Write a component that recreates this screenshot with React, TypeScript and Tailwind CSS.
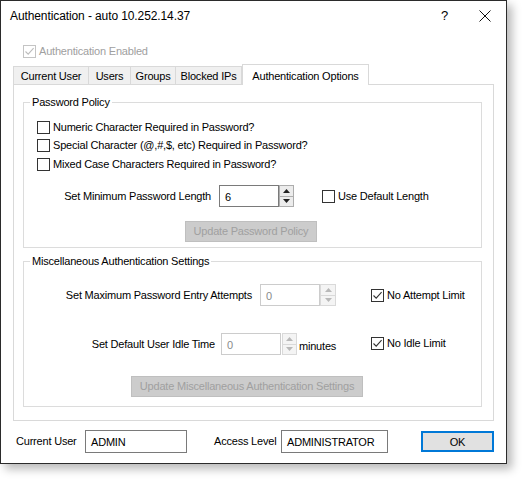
import React from "react"

const font = "font-['Liberation_Sans',Arial,sans-serif]"

function CheckBox({ checked = false, disabled = false }: { checked?: boolean; disabled?: boolean }) {
  return (
    <span
      className={
        "flex h-[13px] w-[13px] shrink-0 items-center justify-center border bg-white " +
        (disabled ? "border-[#c4c4c4]" : "border-[#333333]")
      }
    >
      {checked && (
        <svg width="11" height="11" viewBox="0 0 11 11">
          <path
            d="M1.5 5.5 L4.2 8.2 L9.6 2.2"
            fill="none"
            stroke={disabled ? "#bcbcbc" : "#333333"}
            strokeWidth="1.1"
          />
        </svg>
      )}
    </span>
  )
}

function CheckRow({ label, checked, disabled }: { label: string; checked?: boolean; disabled?: boolean }) {
  return (
    <label className="flex items-center">
      <CheckBox checked={checked} disabled={disabled} />
      <span className={"ml-[3px] " + (disabled ? "text-[#a0a0a0]" : "text-black")}>{label}</span>
    </label>
  )
}

function Spinner({ disabled = false, w = "w-[15px]" }: { disabled?: boolean; w?: string }) {
  const border = disabled ? "border-[#d9d9d9]" : "border-[#adadad]"
  const bg = disabled ? "bg-[#f4f4f4]" : "bg-[#ececec]"
  const fill = disabled ? "#b8b8b8" : "#202020"
  return (
    <div className={"flex h-[22px] flex-col " + w}>
      <div className={"flex flex-1 items-center justify-center border " + border + " " + bg}>
        <svg width="7" height="4" viewBox="0 0 7 4">
          <path d="M0 4 L3.5 0 L7 4 Z" fill={fill} />
        </svg>
      </div>
      <div className={"flex flex-1 items-center justify-center border border-t-0 " + border + " " + bg}>
        <svg width="7" height="4" viewBox="0 0 7 4">
          <path d="M0 0 L7 0 L3.5 4 Z" fill={fill} />
        </svg>
      </div>
    </div>
  )
}

function NumBox({ value, disabled = false }: { value: string; disabled?: boolean }) {
  return (
    <div
      className={
        "flex h-[22px] w-[60px] items-start border bg-white pl-[5px] pt-[3px] " +
        (disabled ? "border-[#cccccc] text-[#8a8a8a]" : "border-[#7a7a7a] text-black")
      }
    >
      {value}
    </div>
  )
}

function Tab({ label, w, active = false }: { label: string; w: string; active?: boolean }) {
  if (active) {
    return (
      <div
        className={
          "relative z-10 -mb-px flex h-[21px] items-start justify-center border border-b-0 border-[#d9d9d9] bg-white pt-[3px] text-black " +
          w
        }
      >
        {label}
      </div>
    )
  }
  return (
    <div
      className={
        "flex h-[18px] items-center justify-center border border-b-0 border-l-0 border-[#d9d9d9] bg-[#f0f0f0] pt-[1px] text-black first:border-l " +
        w
      }
    >
      {label}
    </div>
  )
}

function GroupBox({ title, className, children }: { title: string; className?: string; children: React.ReactNode }) {
  return (
    <fieldset className={"w-[459px] border border-[#dcdcdc] " + (className ?? "")}>
      <legend className="ml-[6px] h-[14px] px-[2px] leading-[14px] text-black">{title}</legend>
      {children}
    </fieldset>
  )
}

function DisabledButton({ label, className }: { label: string; className: string }) {
  return (
    <div
      className={
        "flex h-[21px] items-center justify-center border border-[#bfbfbf] bg-[#cccccc] text-[#a0a0a0] " + className
      }
    >
      {label}
    </div>
  )
}

export default function App() {
  return (
    <div className={"h-[480px] w-[522px] bg-white text-[11px] tracking-[-0.2px] " + font}>
      <div className="flex h-[464px] w-[507px] flex-col border border-[#2b2b2b] bg-white shadow-[5px_5px_9px_rgba(0,0,0,0.28)]">
        {/* title bar */}
        <div className="flex h-[30px] shrink-0 items-center pl-[9px]">
          <span className="text-[12px] tracking-[-0.1px] text-black">Authentication - auto 10.252.14.37</span>
          <span className="ml-auto mr-[31px] text-[13px] text-black">?</span>
          <svg className="mr-[15px]" width="12" height="12" viewBox="0 0 12 12">
            <path d="M0.5 0.5 L11.5 11.5 M11.5 0.5 L0.5 11.5" stroke="#111" strokeWidth="1" />
          </svg>
        </div>

        <div className="mt-[12px] flex h-[16px] items-center pl-[22px]">
          <CheckRow label="Authentication Enabled" checked disabled />
        </div>

        {/* tabs */}
        <div className="ml-[12px] mt-[5px] flex h-[20px] items-end">
          <Tab label="Current User" w="w-[76px]" />
          <Tab label="Users" w="w-[42px]" />
          <Tab label="Groups" w="w-[45px]" />
          <Tab label="Blocked IPs" w="w-[66px]" />
          <Tab label="Authentication Options" w="w-[127px]" active />
        </div>

        <div className="ml-[12px] flex h-[337px] w-[481px] flex-col border border-[#d9d9d9] bg-white pl-[9px] pt-[10px]">
          <GroupBox title="Password Policy" className="h-[153px]">
            <div className="flex flex-col pl-[13px] pt-[9px]">
              <div className="flex h-[18px] items-center">
                <CheckRow label="Numeric Character Required in Password?" />
              </div>
              <div className="flex h-[19px] items-center">
                <CheckRow label="Special Character (@,#,$, etc) Required in Password?" />
              </div>
              <div className="flex h-[18px] items-center">
                <CheckRow label="Mixed Case Characters Required in Password?" />
              </div>
            </div>
            <div className="mt-[12px] flex h-[22px] items-center">
              <span className="w-[187px] text-right">Set Minimum Password Length</span>
              <div className="ml-[8px] flex">
                <NumBox value="6" />
                <Spinner />
              </div>
              <div className="ml-[28px]">
                <CheckRow label="Use Default Length" />
              </div>
            </div>
            <DisabledButton label="Update Password Policy" className="ml-[161px] mt-[14px] w-[132px]" />
          </GroupBox>

          <GroupBox title="Miscellaneous Authentication Settings" className="mt-[6px] h-[153px]">
            <div className="mt-[16px] flex h-[22px] items-center">
              <span className="w-[228px] text-right">Set Maximum Password Entry Attempts</span>
              <div className="ml-[8px] flex w-[111px]">
                <NumBox value="0" disabled />
                <Spinner disabled w="w-[16px]" />
              </div>
              <CheckRow label="No Attempt Limit" checked />
            </div>
            <div className="mt-[27px] flex h-[22px] items-center">
              <span className="w-[191px] text-right">Set Default User Idle Time</span>
              <div className="ml-[6px] flex w-[150px] items-center">
                <NumBox value="0" disabled />
                <div className="ml-[1px]">
                  <Spinner disabled />
                </div>
                <span className="ml-[2px] mt-[4px]">minutes</span>
              </div>
              <div className="-mt-[2px]">
                <CheckRow label="No Idle Limit" checked />
              </div>
            </div>
            <DisabledButton
              label="Update Miscellaneous Authentication Settings"
              className="ml-[107px] mt-[21px] w-[232px]"
            />
          </GroupBox>
        </div>

        {/* footer */}
        <div className="mt-[9px] flex h-[23px] items-center pl-[15px]">
          <span className="w-[69px]">Current User</span>
          <div className="flex h-[23px] w-[102px] items-start border border-[#7a7a7a] pl-[5px] pt-[3px]">ADMIN</div>
          <span className="ml-[27px] w-[67px]">Access Level</span>
          <div className="flex h-[23px] w-[107px] items-start border border-[#7a7a7a] pl-[5px] pt-[3px]">
            ADMINISTRATOR
          </div>
          <div className="ml-[33px] flex h-[21px] w-[73px] items-center justify-center border-2 border-[#0078d7] bg-[#e1e1e1] pt-[1px]">
            OK
          </div>
        </div>
      </div>
    </div>
  )
}
